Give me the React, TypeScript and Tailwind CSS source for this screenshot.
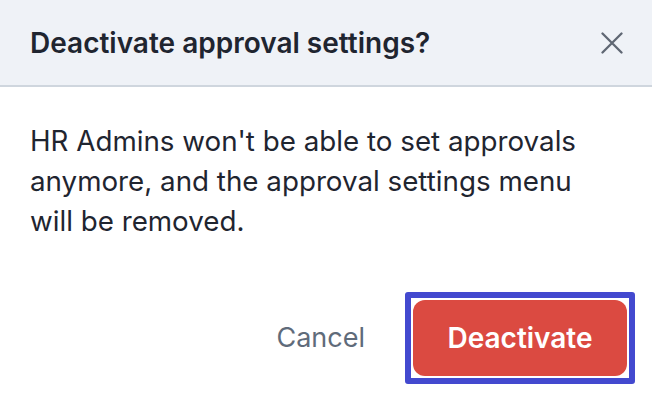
export default function App() {
  return (
    <div className="flex h-[408px] w-[652px] flex-col bg-white font-['Inter',sans-serif]">
      <div className="flex h-[87px] items-center justify-between border-b-2 border-[#cfd6de] bg-[#eff2f7] pl-[30px] pr-[29px]">
        <h2 className="text-[28px] font-semibold text-[#1f2530]">
          Deactivate approval settings?
        </h2>
        <button className="flex h-[22px] w-[22px] items-center justify-center text-[#5f6773]">
          <svg width="22" height="22" viewBox="0 0 22 22" fill="none">
            <path
              d="M1.5 1.5L20.5 20.5M20.5 1.5L1.5 20.5"
              stroke="currentColor"
              strokeWidth="2.3"
              strokeLinecap="round"
            />
          </svg>
        </button>
      </div>
      <p className="pl-[30px] pr-[50px] pt-[34px] text-[27.75px] leading-[40px] text-[#1f2530]">
        HR Admins won't be able to set approvals anymore, and the approval
        settings menu will be removed.
      </p>
      <div className="mt-auto flex items-center justify-end gap-[40px] pb-[24px] pr-[17px]">
        <button className="text-[27px] text-[#5f6b7a]">Cancel</button>
        <div className="rounded-[3px] border-[6px] border-[#4349cf] p-[2px]">
          <button className="flex h-[76px] w-[214px] items-center justify-center rounded-[12px] bg-[#db4a41] text-[28px] font-semibold text-white">
            Deactivate
          </button>
        </div>
      </div>
    </div>
  );
}
